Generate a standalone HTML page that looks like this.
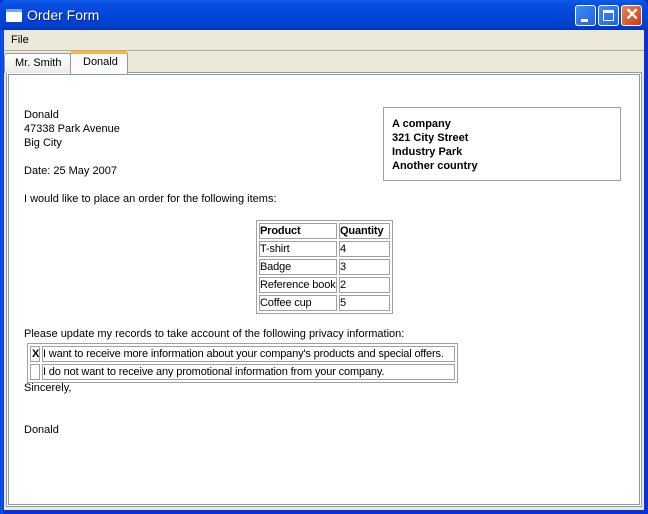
<!DOCTYPE html>
<html><head><style>
*{margin:0;padding:0;box-sizing:border-box}
body{width:648px;height:514px;overflow:hidden;background:#0831d9;font-family:"Liberation Sans",Tahoma,sans-serif;font-size:11px;position:relative}
.a{position:absolute;white-space:nowrap}
#title{left:0;top:0;width:648px;height:30px;background:linear-gradient(#0a5ee8,#0a4ee0 15%,#0046d8 50%,#0041cd 85%,#0036b4);border-radius:7px 7px 0 0}
#frame{left:0;top:30px;width:648px;height:484px;background:linear-gradient(90deg,#0a3ad8,#0b5af0 2px,#0831d9 4px)}
#client{left:4px;top:30px;width:640px;height:480px;background:#ece9d8}
.btn{top:5px;width:21px;height:21px;border:1px solid #fff;border-radius:3px;background:linear-gradient(135deg,#3c8cf8,#2262e0)}
td{border:1px solid #a0a0a0;padding:0;height:16px;line-height:14px;font-size:11px;overflow:hidden;white-space:nowrap;letter-spacing:-0.15px}
table{border-collapse:separate;border-spacing:2px;border:1px solid #a0a0a0;table-layout:fixed}
</style></head><body>
<div class="a" id="title"></div>
<div class="a" id="frame"></div>
<div class="a" style="left:6px;top:9px;width:16px;height:13px;background:#fff;border-top:3px solid #7aa6f0;border-radius:1px"></div>
<div class="a" style="left:27px;top:7px;color:#fff;font-size:14px;text-shadow:1px 1px #0a1e80">Order Form</div>
<div class="a btn" style="left:575px"><div class="a" style="left:5px;top:13px;width:7px;height:3px;background:#fff"></div></div>
<div class="a btn" style="left:598px"><div class="a" style="left:4px;top:4px;width:11px;height:11px;border:1px solid #fff;border-top-width:3px"></div></div>
<div class="a btn" style="left:621px;background:linear-gradient(135deg,#e8845c,#c83c14)"><div class="a" style="left:3px;top:-1px;color:#fff;font-size:17px;font-weight:bold">✕</div></div>
<div class="a" id="client"></div>
<div class="a" style="left:11px;top:34px">File</div>
<div class="a" style="left:4px;top:50px;width:640px;height:1px;background:#b0ad9c"></div>
<div class="a" style="left:6px;top:72px;width:636px;height:435px;border:1px solid #919b9c;background:#fbfbfa"></div>
<div class="a" style="left:8px;top:74px;width:632px;height:431px;border:1px solid #7f9db9;background:#fff"></div>
<div class="a" style="left:4px;top:53px;width:67px;height:20px;border:1px solid #919b9c;border-bottom:none;border-radius:3px 3px 0 0;background:linear-gradient(#fff,#ecebe5)"></div>
<div class="a" style="left:15px;top:57px">Mr. Smith</div>
<div class="a" style="left:70px;top:51px;width:58px;height:23px;border:1px solid #919b9c;border-bottom:none;border-top:3px solid #ffb43c;border-radius:3px 3px 0 0;background:#fcfcfe"></div>
<div class="a" style="left:83px;top:56px">Donald</div>
<div class="a" style="left:24px;top:108px;line-height:14px">Donald<br>47338 Park Avenue<br>Big City<br><br>Date: 25 May 2007<br><br>I would like to place an order for the following items:</div>
<div class="a" style="left:383px;top:107px;width:238px;height:74px;border:1px solid #a0a0a0"></div>
<div class="a" style="left:392px;top:117px;line-height:14px;font-weight:bold">A company<br>321 City Street<br>Industry Park<br>Another country</div>
<table class="a" style="left:256px;top:220px;width:135px">
<colgroup><col style="width:78px"><col style="width:51px"></colgroup>
<tr><td><b>Product</b></td><td><b>Quantity</b></td></tr>
<tr><td>T-shirt</td><td>4</td></tr>
<tr><td>Badge</td><td>3</td></tr>
<tr><td>Reference book</td><td>2</td></tr>
<tr><td>Coffee cup</td><td>5</td></tr>
</table>
<div class="a" style="left:24px;top:328px">Please update my records to take account of the following privacy information:</div>
<table class="a" style="left:27px;top:343px;width:429px">
<colgroup><col style="width:10px"><col style="width:413px"></colgroup>
<tr><td style="padding-left:1px"><b>X</b></td><td>I want to receive more information about your company's products and special offers.</td></tr>
<tr><td></td><td>I do not want to receive any promotional information from your company.</td></tr>
</table>
<div class="a" style="left:24px;top:382px">Sincerely,</div>
<div class="a" style="left:24px;top:424px">Donald</div>
</body></html>
